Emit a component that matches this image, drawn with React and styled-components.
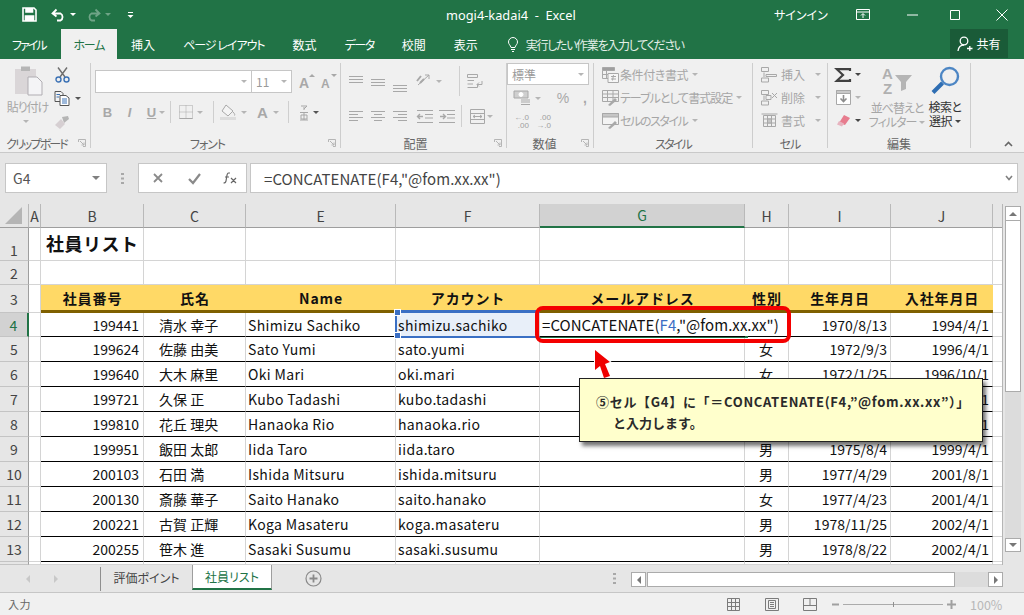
import React from 'react';
import styled, { createGlobalStyle } from 'styled-components';

const JP = `"Noto Sans CJK JP", "Noto Sans", sans-serif`;
const GREEN = '#217346';
const GRAY = '#a8a8a8';

const Global = createGlobalStyle`
  html, body { margin: 0; padding: 0; background: #e6e6e6; }
  body { font-family: ${JP}; overflow: hidden; }
`;

const Page = styled.div`
  width: 1024px;
  height: 615px;
  display: flex;
  flex-direction: column;
  overflow: hidden;
`;

/* title bar */
const TitleBar = styled.div`
  height: 29px;
  flex: none;
  background: ${GREEN};
  color: #fff;
  display: flex;
  align-items: center;
`;
const Qat = styled.div`
  width: 446px;
  flex: none;
  display: flex;
  align-items: center;
`;
const Slot = styled.div`
  width: ${(p) => p.$w}px;
  flex: none;
  display: flex;
  justify-content: ${(p) => p.$justify || 'center'};
  align-items: center;
  opacity: ${(p) => p.$dim || 1};
`;
const DocTitle = styled.div`
  width: 328px;
  flex: none;
  font-size: 12.8px;
  white-space: pre;
  font-family: "Noto Sans", sans-serif;
`;
const SignIn = styled.div`
  width: 82px;
  flex: none;
  font-size: 12px;
  font-feature-settings: "palt";
`;

/* tab row */
const TabRow = styled.div`
  height: 30px;
  flex: none;
  background: ${GREEN};
  display: flex;
  align-items: stretch;
  font-feature-settings: "palt";
`;
const Tab = styled.div`
  padding: 0 ${(p) => p.$pad || 14}px 0 ${(p) => p.$padL || p.$pad || 14}px;
  font-size: 12px;
  letter-spacing: ${(p) => p.$ls || 0}px;
  display: flex;
  align-items: center;
  white-space: pre;
  flex: none;
  color: ${(p) => (p.$active ? GREEN : '#fff')};
  background: ${(p) => (p.$active ? '#f0f0f0' : 'transparent')};
`;
const TellMe = styled.div`
  margin-left: 16px;
  flex: none;
  display: flex;
  align-items: center;
  gap: 8px;
  color: #e4efe8;
  font-size: 12px;
  letter-spacing: -1.3px;
  white-space: nowrap;
`;
const Share = styled.div`
  width: 58px;
  height: 29px;
  margin-left: auto;
  margin-right: 16px;
  background: #1a5b38;
  color: #fff;
  font-size: 12px;
  flex: none;
  white-space: nowrap;
  display: flex;
  align-items: center;
  justify-content: center;
  gap: 3px;
`;

/* ribbon */
const Ribbon = styled.div`
  height: 94px;
  flex: none;
  box-sizing: border-box;
  background: #f0f0f0;
  border-bottom: 1px solid #c9c9c9;
  display: flex;
  padding-top: 4px;
  position: relative;
  font-feature-settings: "palt";
`;
const Group = styled.div`
  width: ${(p) => p.$w}px;
  height: 85px;
  flex: none;
  box-sizing: border-box;
  border-right: 1px solid #cdcdcd;
  display: flex;
  flex-direction: column;
`;
const GroupBody = styled.div`
  flex: 1;
  min-height: 0;
  display: flex;
  padding-left: ${(p) => p.$left || 0}px;
`;
const GroupLabel = styled.div`
  height: 17px;
  margin-bottom: -5px;
  flex: none;
  position: relative;
  text-align: center;
  font-size: 12px;
  line-height: 15px;
  letter-spacing: ${(p) => p.$ls || 0}px;
  white-space: nowrap;
  color: #666;
  padding-right: ${(p) => p.$shift || 0}px;
`;
const Launcher = styled.span`
  position: absolute;
  right: 4px;
  top: 3px;
  display: block;
  line-height: 0;
`;
const Stack = styled.div`
  display: flex;
  flex-direction: column;
  gap: ${(p) => p.$gap || 0}px;
  padding-top: ${(p) => p.$top || 0}px;
  width: ${(p) => (p.$w ? `${p.$w}px` : 'auto')};
  align-items: ${(p) => p.$align || 'stretch'};
  flex: none;
`;
const ToolRow = styled.div`
  display: flex;
  align-items: center;
  height: ${(p) => p.$h || 22}px;
`;
const BigLabel = styled.div`
  font-size: 12px;
  line-height: 14px;
  letter-spacing: ${(p) => p.$ls || -1}px;
  color: ${(p) => (p.$on ? '#333' : '#a6a6a6')};
  text-align: center;
  white-space: nowrap;
  margin-top: ${(p) => p.$mt || 0}px;
  display: flex;
  align-items: center;
  gap: 3px;
`;
const RowText = styled.span`
  font-size: 12px;
  color: #a6a6a6;
  white-space: nowrap;
  letter-spacing: ${(p) => p.$ls || 0}px;
  margin-left: ${(p) => p.$ml || 1}px;
  width: ${(p) => (p.$w ? `${p.$w}px` : 'auto')};
`;
const Combo = styled.div`
  width: ${(p) => p.$w}px;
  height: ${(p) => p.$h || 23}px;
  box-sizing: border-box;
  background: #fff;
  border: 1px solid #c6c6c6;
  margin-right: ${(p) => p.$mr || 0}px;
  flex: none;
  display: flex;
  align-items: center;
  font-size: 12px;
  color: #9a9a9a;
  padding: 0 4px;
`;
const Tri = styled.span`
  display: block;
  width: 0;
  height: 0;
  border-left: 3px solid transparent;
  border-right: 3px solid transparent;
  border-top: 3px solid ${(p) => p.$c || '#b5b5b5'};
  margin-left: ${(p) => (p.$auto ? 'auto' : '0')};
`;
const VSep = styled.span`
  display: block;
  width: 1px;
  height: ${(p) => p.$h || 22}px;
  background: #cfcfcf;
  flex: none;
`;
const Collapse = styled.span`
  position: absolute;
  right: 11px;
  bottom: 5px;
  line-height: 0;
`;

/* formula bar */
const FormulaBar = styled.div`
  height: 51px;
  flex: none;
  box-sizing: border-box;
  padding: 10px 6px 11px 5px;
  background: #e6e6e6;
  display: flex;
  align-items: stretch;
`;
const BarBox = styled.div`
  box-sizing: border-box;
  background: #fff;
  border: 1px solid #c6c6c6;
  display: flex;
  align-items: center;
  width: ${(p) => (p.$w ? `${p.$w}px` : 'auto')};
  flex: ${(p) => (p.$w ? 'none' : '1')};
  color: #444;
`;
const NameText = styled.span`
  padding-left: 7px;
  flex: 1;
  font-size: 14px;
  color: #555;
`;
const FormulaText = styled.span`
  padding-left: 13px;
  flex: 1;
  font-size: 15px;
  letter-spacing: 0.05px;
  white-space: nowrap;
`;
const DotSlot = styled.div`
  width: 31px;
  flex: none;
  display: flex;
  align-items: center;
  justify-content: center;
`;

/* sheet */
const Sheet = styled.div`
  height: 361px;
  flex: none;
  position: relative;
  display: flex;
  background: #e6e6e6;
  overflow: hidden;
`;
const Grid = styled.div`
  width: 1002px;
  flex: none;
  display: grid;
  grid-template-columns: 29px 12px 103px 102px 150px 144px 205px 44px 102px 102px 9px;
  grid-template-rows: 24px 33px 24px 28px 24px repeat(9, 25px) 3px;
  background: #fff;
  border-right: 1px solid #b5b5b5;
`;
const ColHead = styled.div`
  box-sizing: border-box;
  background: ${(p) => (p.$sel ? '#d2d2d2' : '#e6e6e6')};
  color: ${(p) => (p.$sel ? GREEN : '#444')};
  border-right: ${(p) => (p.$plain ? 'none' : '1px solid #b9b9b9')};
  border-bottom: ${(p) => (p.$sel ? `2px solid ${GREEN}` : '1px solid #9e9e9e')};
  font-size: 14px;
  display: flex;
  align-items: center;
  justify-content: center;
`;
const RowHead = styled.div`
  box-sizing: border-box;
  background: ${(p) => (p.$sel ? '#d2d2d2' : '#e6e6e6')};
  color: ${(p) => (p.$sel ? GREEN : '#444')};
  border-right: ${(p) => (p.$sel ? `2px solid ${GREEN}` : '1px solid #9e9e9e')};
  border-bottom: 1px solid #c4c4c4;
  font-size: 14px;
  display: flex;
  align-items: ${(p) => (p.$low ? 'flex-end' : 'center')};
  justify-content: center;
`;
const Cell = styled.div`
  box-sizing: border-box;
  min-width: 0;
  white-space: nowrap;
  font-size: 14px;
  color: #111;
  display: flex;
  align-items: center;
  justify-content: ${(p) => p.$justify || 'flex-start'};
  padding: 0 ${(p) => p.$right || 3}px 0 ${(p) => p.$left || 2}px;
  border-right: ${(p) => (p.$noRight ? 'none' : '1px solid #d4d4d4')};
  border-bottom: 1px solid ${(p) => p.$line || '#d4d4d4'};
  background: ${(p) => p.$bg || 'transparent'};
  letter-spacing: ${(p) => p.$ls || 0}px;
`;
const TitleCell = styled(Cell)`
  font-size: 18px;
  font-weight: 700;
  letter-spacing: 0.5px;
  padding-left: 5px;
  padding-bottom: 2px;
`;
const HeadCell = styled.div`
  box-sizing: border-box;
  background: #ffd966;
  border-bottom: 3px solid #7f6000;
  font-size: 14px;
  font-weight: 700;
  color: #111;
  letter-spacing: 0.9px;
  display: flex;
  align-items: center;
  justify-content: center;
  white-space: nowrap;
`;
const FormulaCell = styled(Cell)`
  font-size: 15px;
  letter-spacing: 0.05px;
  padding-left: 2px;
  overflow: visible;
  position: relative;
  z-index: 1;
`;
const Ref = styled.span`
  color: #3c6ec4;
`;
const Range = styled.div`
  position: absolute;
  left: 395px;
  top: 106px;
  width: 145px;
  height: 28px;
  box-sizing: border-box;
  border: 2px solid #3a6fc4;
  border-top-width: 3px;
  border-right: none;
`;
const Handle = styled.span`
  position: absolute;
  left: -3px;
  ${(p) => (p.$bottom ? 'bottom: -3px;' : 'top: -4px;')}
  width: 5px;
  height: 5px;
  background: #3a6fc4;
  border: 0.5px solid #fff;
`;
const ActiveEdge = styled.div`
  position: absolute;
  left: 540px;
  top: 132px;
  width: 208px;
  height: 2px;
  background: ${GREEN};
`;
const RedBox = styled.div`
  position: absolute;
  left: 535px;
  top: 102px;
  width: 256px;
  height: 37px;
  box-sizing: border-box;
  border: 4px solid #f40000;
  border-radius: 8px;
  z-index: 3;
`;
const Pointer = styled.svg`
  position: absolute;
  left: 590px;
  top: 143px;
  z-index: 3;
`;
const Callout = styled.div`
  position: absolute;
  left: 579px;
  top: 174px;
  width: 404px;
  height: 64px;
  box-sizing: border-box;
  background: #ffffcc;
  border: 1px solid #222;
  box-shadow: 3px 4px 4px rgba(0, 0, 0, 0.55);
  padding: 12px 0 0 16px;
  font-size: 13px;
  line-height: 21px;
  font-weight: 700;
  color: #2a2a2a;
  white-space: nowrap;
  z-index: 4;
`;
const CalloutLine = styled.div`
  padding-left: ${(p) => p.$indent || 0}px;
  letter-spacing: ${(p) => p.$ls || 0}px;
`;
const VScroll = styled.div`
  width: 20px;
  flex: none;
  position: relative;
  display: flex;
  flex-direction: column;
  padding: 2px 0 0 2px;
  box-sizing: border-box;
`;
const VTrack = styled.div`
  width: 16px;
  height: 346px;
  flex: none;
  box-sizing: border-box;
  background: #dcdcdc;
  display: flex;
  flex-direction: column;
`;
const ScrollBtn = styled.div`
  height: ${(p) => p.$h || 15}px;
  width: ${(p) => (p.$w ? `${p.$w}px` : 'auto')};
  flex: none;
  box-sizing: border-box;
  background: #fff;
  border: 1px solid #ababab;
  display: flex;
  align-items: center;
  justify-content: center;
`;
const VThumb = styled.div`
  height: 171px;
  flex: none;
  box-sizing: border-box;
  background: #fff;
  border: 1px solid #ababab;
  border-top: none;
`;
const Spacer = styled.div`
  flex: 1;
`;
const Arrow = styled.span`
  display: block;
  width: 0;
  height: 0;
  ${(p) => {
    const c = p.$c || '#777';
    if (p.$dir === 'up') return `border-left:4px solid transparent;border-right:4px solid transparent;border-bottom:4px solid ${c};`;
    if (p.$dir === 'down') return `border-left:4px solid transparent;border-right:4px solid transparent;border-top:4px solid ${c};`;
    if (p.$dir === 'left') return `border-top:4px solid transparent;border-bottom:4px solid transparent;border-right:4px solid ${c};`;
    return `border-top:4px solid transparent;border-bottom:4px solid transparent;border-left:4px solid ${c};`;
  }}
`;

/* sheet tabs */
const TabStrip = styled.div`
  height: 28px;
  flex: none;
  box-sizing: border-box;
  border-bottom: 1px solid #c6c6c6;
  background: #e6e6e6;
  display: flex;
  align-items: stretch;
`;
const SheetNav = styled.div`
  width: 101px;
  flex: none;
  box-sizing: border-box;
  display: flex;
  align-items: center;
  padding-left: 26px;
  gap: 24px;
  height: 24px;
  border-right: 1px solid #8f8f8f;
  margin-top: 2px;
`;
const SheetTab = styled.div`
  width: ${(p) => p.$w}px;
  flex: none;
  box-sizing: border-box;
  height: 25px;
  font-size: 12px;
  font-feature-settings: "palt";
  display: flex;
  align-items: center;
  justify-content: center;
  color: ${(p) => (p.$active ? GREEN : '#444')};
  background: ${(p) => (p.$active ? '#fff' : 'transparent')};
  border-left: ${(p) => (p.$active ? '1px solid #9e9e9e' : 'none')};
  border-right: ${(p) => (p.$active ? '1px solid #9e9e9e' : 'none')};
  border-bottom: ${(p) => (p.$active ? `2px solid ${GREEN}` : 'none')};
`;
const AddSlot = styled.div`
  width: 359px;
  flex: none;
  padding-left: 33px;
  box-sizing: border-box;
  display: flex;
  align-items: center;
  height: 26px;
`;
const TabGrip = styled.div`
  margin-left: auto;
  margin-right: 15px;
`;
const HScroll = styled.div`
  width: 372px;
  flex: none;
  height: 15px;
  margin-top: 7px;
  display: flex;
  background: #dcdcdc;
`;
const HThumb = styled.div`
  width: 308px;
  flex: none;
  margin-left: 1px;
  box-sizing: border-box;
  background: #fff;
  border: 1px solid #ababab;
`;

/* status bar */
const StatusBar = styled.div`
  flex: 1;
  background: #f0f0f0;
  display: flex;
  align-items: center;
  font-size: 11px;
  color: #666;
  padding-left: 8px;
`;
const StatusText = styled.span`
  width: 719px;
  flex: none;
  letter-spacing: 0.5px;
`;
const ZoomLine = styled.div`
  width: 100px;
  height: 1px;
  background: #ababab;
  flex: none;
  position: relative;
  margin: 0 4px;
`;
const ZoomTick = styled.span`
  position: absolute;
  left: 50px;
  top: -2px;
  width: 1px;
  height: 5px;
  background: #8f8f8f;
`;
const Pct = styled.span`
  margin-left: 14px;
  color: #b8b8b8;
  font-size: 12.5px;
`;
const Letter = styled.span`
  font-size: ${(p) => p.$size || 13}px;
  font-weight: ${(p) => p.$weight || 700};
  font-style: ${(p) => (p.$italic ? 'italic' : 'normal')};
  text-decoration: ${(p) => (p.$under ? 'underline' : 'none')};
  font-family: "Liberation Sans", sans-serif;
  color: #a8a8a8;
`;
const DecWrap = styled.div`
  display: flex;
  flex-direction: column;
  font-size: 8px;
  line-height: 8px;
  color: #9f9f9f;
  font-family: "Liberation Sans", sans-serif;
  text-align: right;
`;

/* small svg helpers */
const Ic = ({ w = 16, h = 16, children, fill = 'none', stroke = GRAY, sw = 1 }) => (
  <svg width={w} height={h} viewBox={`0 0 ${w} ${h}`} fill={fill} stroke={stroke} strokeWidth={sw} style={{ display: 'block', overflow: 'visible' }}>
    {children}
  </svg>
);
const Lines = ({ rows, w = 15, h = 15 }) => (
  <Ic w={w} h={h}>
    {rows.map(([x1, x2, y]) => <path key={`${x1}${y}`} d={`M${x1} ${y + 0.5}H${x2}`} />)}
  </Ic>
);
const LauncherIcon = () => (
  <Launcher>
    <Ic w={8} h={8} stroke="#b5b5b5"><path d="M0.5 3V0.5H7.5V7.5H5M2 2L6 6M6 3.5V6H3.5" /></Ic>
  </Launcher>
);
const Save = () => (
  <Ic w={15} h={15} stroke="#fff" sw={1.6}>
    <path d="M1 1H12L14 3V14H1Z" />
    <path d="M4 1V5H10.5V1" fill="#fff" />
    <path d="M3.5 14V9H11.5V14" fill="#fff" />
  </Ic>
);
const Undo = () => (
  <Ic w={15} h={14} stroke="#fff" sw={1.8}>
    <path d="M5.5 1.5L1.5 5.5L5.5 8.5M2 5.5H9.5A4 4 0 0 1 9.5 12.5H6" />
  </Ic>
);
const Redo = () => (
  <Ic w={15} h={14} stroke="#fff" sw={1.8}>
    <path d="M9.5 1.5L13.5 5.5L9.5 8.5M13 5.5H5.5A4 4 0 0 0 5.5 12.5H9" />
  </Ic>
);
const Bulb = () => (
  <Ic w={10} h={15} stroke="#fff">
    <path d="M3 10.5C2.5 8 .5 7.5 .5 5A4.5 4.5 0 0 1 9.5 5C9.5 7.5 7.5 8 7 10.5ZM3 12.5H7M4 14.5H6" />
  </Ic>
);
const Person = () => (
  <Ic w={16} h={16} stroke="#fff" sw={1.3}>
    <circle cx="7" cy="5" r="3.8" />
    <path d="M1 15C1.5 11 4 9 7 9M10 12.5H15.5M12.8 10V15" />
  </Ic>
);
const Paste = () => (
  <Ic w={30} h={30} stroke="none">
    <path d="M1 4H22V29H1Z" fill="#dad6d8" />
    <path d="M7 1.5H16V6H7Z" fill="#b6b6b6" />
    <path d="M14 12H23L28 17V30H14Z" fill="#f4f4f6" stroke="#b0adb2" />
  </Ic>
);
const Scissors = () => (
  <Ic w={15} h={16} stroke="#6f6f6f" sw={1.4}>
    <path d="M3 .5L10 10M12 .5L5 10" />
    <circle cx="3.5" cy="12.5" r="2.5" stroke="#3c72b5" />
    <circle cx="11.5" cy="12.5" r="2.5" stroke="#3c72b5" />
  </Ic>
);
const Copy = () => (
  <Ic w={16} h={15} stroke="#555">
    <path d="M1 .5H7L9 2.5V10.5H1Z" fill="#f4f4f4" />
    <path d="M6 4.5H12L15 7V14.5H6Z" fill="#fff" />
    <path d="M2.5 3.5H6M2.5 6H5M8 8H13M8 10H13M8 12H13" stroke="#3c72b5" />
  </Ic>
);
const Painter = () => (
  <Ic w={16} h={15} stroke="none">
    <path d="M8 2L14 1L15 4L10 8Z" fill="#b5b5b5" />
    <path d="M1 10L7 4L11 9L6 14Z" fill="#d6cfd2" />
  </Ic>
);
const GrowA = ({ up }) => (
  <Ic w={16} h={18} stroke="none">
    <text x="0" y="15" fontSize={up ? 14 : 12} fontWeight="700" fill="#a8a8a8" fontFamily="Liberation Sans">A</text>
    <path d={up ? 'M10 4L13 1L16 4Z' : 'M10 1H16L13 4Z'} fill="#a8a8a8" />
  </Ic>
);
const Borders = () => (
  <Ic w={14} h={14}>
    <path d="M.5 .5H13.5V13.5H.5ZM.5 7H13.5M7 .5V13.5" strokeDasharray="1 1" />
    <path d="M.5 13.5H13.5" />
  </Ic>
);
const Bucket = () => (
  <Ic w={17} h={16}>
    <path d="M6 1L13 7L8 12L2 7Z" fill="#f4f4f4" />
    <path d="M13 8C15 10 15 11 14.5 11.5" />
    <path d="M0 14.5H16" stroke="#dcdcdc" strokeWidth="3" />
  </Ic>
);
const Ruby = () => (
  <Ic w={10} h={17}>
    <path d="M2 2H8L5 5M5 3V6M1 8.5H9M5 8.5V16M2 11H8V15H2ZM1 16H9" />
  </Ic>
);
const Slant = () => (
  <Ic w={17} h={17}>
    <path d="M2 12L13 2M13 2H9M13 2V6" />
    <path d="M1 8L5 3M4 10L8 6" strokeWidth="2" />
  </Ic>
);
const Wrap = () => (
  <Ic w={16} h={15}>
    <path d="M.5 .5H10.5V3.5H.5ZM.5 6.5H7M.5 10H6M.5 13.5H10.5V10M15 7V10.5H10M12 8.5L10 10.5L12 12.5" />
  </Ic>
);
const Merge = () => (
  <Ic w={15} h={15}>
    <path d="M.5 .5H14.5V14.5H.5ZM.5 4.5H14.5M.5 10.5H14.5M3 7.5H12M3 7.5L5 6M3 7.5L5 9M12 7.5L10 6M12 7.5L10 9" />
  </Ic>
);
const Indent = ({ flip }) => (
  <Ic w={16} h={13}>
    <path d="M0 .5H16M8 4.5H16M8 8H16M0 12.5H16" />
    <path d={flip ? 'M1 6.5H6M4 4L6.5 6.5L4 9' : 'M6 6.5H1M3 4L.5 6.5L3 9'} strokeWidth="1.4" />
  </Ic>
);
const Currency = () => (
  <Ic w={18} h={16}>
    <path d="M1 1H15V8H1Z" fill="#cfcfcf" />
    <circle cx="8" cy="4.5" r="2" fill="#fff" stroke="#fff" />
    <path d="M8 10H17M8 12H17M8 14.5H17" />
  </Ic>
);
const DecimalIcon = ({ a, b, left }) => (
  <DecWrap>
    <span>{left ? `←${a}` : a}</span>
    <span>{left ? b : `→${b}`}</span>
  </DecWrap>
);
const CondIcon = () => (
  <Ic w={17} h={16}>
    <path d="M.5 .5H12.5V3.5H.5Z" fill="#9f9f9f" />
    <path d="M.5 3.5V11.5H6M4.5 3.5V11.5M.5 7.5H6" />
    <path d="M6 6.5H16.5V15.5H6Z" fill="#f6f6f6" />
    <path d="M9 9.5H14M9 12H14M11.5 8L10.5 13.5" />
  </Ic>
);
const TableIcon = () => (
  <Ic w={17} h={16}>
    <path d="M.5 .5H16.5V11.5H.5ZM5.5 .5V11.5M11 .5V11.5M.5 4H16.5M.5 7.5H16.5" />
    <path d="M6 15L13 8L15 10L8 16Z" fill="#a8a8a8" stroke="none" />
  </Ic>
);
const StyleIcon = () => (
  <Ic w={17} h={16}>
    <path d="M.5 .5H16.5V11.5H.5Z" fill="#f4f4f4" />
    <path d="M.5 .5H16.5V4H.5Z" fill="#c6c6c6" />
    <path d="M6 15L13 8L15 10L8 16Z" fill="#a8a8a8" stroke="none" />
  </Ic>
);
const CellInsert = () => (
  <Ic w={17} h={16}>
    <path d="M.5 .5H7.5V4.5H.5ZM.5 11H7.5V15H.5ZM3 5.5V10M5 7.5H15.5V9.5H5Z" />
  </Ic>
);
const CellDelete = () => (
  <Ic w={17} h={16}>
    <path d="M.5 .5H7.5V4.5H.5ZM.5 11H7.5V15H.5ZM3 5.5V10M5 5.5H10V9.5H5ZM11 3L16 8M16 3L11 8" />
  </Ic>
);
const CellFormat = () => (
  <Ic w={17} h={16}>
    <path d="M2.5 2.5H14.5V13.5H2.5ZM.5 1H16.5M2.5 6H14.5M2.5 10H14.5M6.5 2.5V13.5M10.5 2.5V13.5" />
    <path d="M6.5 6H10.5V10H6.5Z" fill="#c6c6c6" />
  </Ic>
);
const Sigma = () => (
  <Ic w={16} h={14} stroke="#404040" sw={2.2}>
    <path d="M15 3V1.2H1.8L8 7L1.8 12.8H15V11" />
  </Ic>
);
const FillDown = () => (
  <Ic w={15} h={15}>
    <path d="M.5 .5H14.5V14.5H.5Z" fill="#fff" />
    <path d="M.5 .5H14.5V3.5H.5Z" fill="#c8c8c8" />
    <path d="M7.5 5V11M4.5 8.5L7.5 11.5L10.5 8.5" strokeWidth="1.6" stroke="#8c8c8c" />
  </Ic>
);
const Eraser = () => (
  <Ic w={15} h={13} stroke="none">
    <path d="M8 1L14 4L9 11L3 9Z" fill="#e77c8e" />
    <path d="M3 7L8 9.5L6 12.5L1 10.5Z" fill="#e7b3bf" />
  </Ic>
);
const SortFilter = () => (
  <Ic w={31} h={30} stroke="none">
    <text x="0" y="13" fontSize="15" fill="#b0b0b0" fontFamily="Liberation Sans" fontWeight="700">A</text>
    <text x="1" y="28" fontSize="15" fill="#b0b0b0" fontFamily="Liberation Sans" fontWeight="700">Z</text>
    <path d="M13 9H30L24 16V23L19 25V16Z" fill="#b5b5b5" />
  </Ic>
);
const Search = () => (
  <Ic w={29} h={29} stroke="#4d86c4" sw={2.4}>
    <circle cx="18.5" cy="10.5" r="8.5" />
    <path d="M11.5 17L2 26.5" strokeWidth="4" stroke="#2f6eb3" />
  </Ic>
);
const ViewGrid = () => (
  <Ic w={13} h={13} stroke="#7b7b7b"><path d="M.5 .5H12.5V12.5H.5ZM4.5 .5V12.5M8.5 .5V12.5M.5 4.5H12.5M.5 8.5H12.5" /></Ic>
);
const ViewPage = () => (
  <Ic w={14} h={13} stroke="#7b7b7b"><path d="M.5 .5H13.5V12.5H.5ZM3.5 2.5H10.5V10.5H3.5ZM5 4.5H9M5 6.5H9M5 8.5H9" /></Ic>
);
const ViewBreak = () => (
  <Ic w={14} h={13} stroke="#7b7b7b"><path d="M.5 .5H13.5V12.5H.5ZM.5 7.5H13.5M7 .5V7.5" /></Ic>
);
const PlusCircle = () => (
  <Ic w={17} h={17} stroke="#8a8a8a" sw={1.2}>
    <circle cx="8.5" cy="8.5" r="7.5" />
    <path d="M4.5 8.5H12.5M8.5 4.5V12.5" strokeWidth="1.8" />
  </Ic>
);
const Grip = () => (
  <Ic w={3} h={11} stroke="none">
    <path d="M0 0H3V2H0ZM0 4.5H3V6.5H0ZM0 9H3V11H0Z" fill="#a8a8a8" />
  </Ic>
);

const columns = ['A', 'B', 'C', 'E', 'F', 'G', 'H', 'I', 'J'];
const heads = ['社員番号', '氏名', 'Name', 'アカウント', 'メールアドレス', '性別', '生年月日', '入社年月日'];
const staff = [
  ['199441', '清水 幸子', 'Shimizu Sachiko', 'shimizu.sachiko', '', '1970/8/13', '1994/4/1'],
  ['199624', '佐藤 由美', 'Sato Yumi', 'sato.yumi', '女', '1972/9/3', '1996/4/1'],
  ['199640', '大木 麻里', 'Oki Mari', 'oki.mari', '女', '1972/1/25', '1996/10/1'],
  ['199721', '久保 正', 'Kubo Tadashi', 'kubo.tadashi', '男', '1974/2/15', '1998/4/1'],
  ['199810', '花丘 理央', 'Hanaoka Rio', 'hanaoka.rio', '女', '1974/11/8', '1998/4/1'],
  ['199951', '飯田 太郎', 'Iida Taro', 'iida.taro', '男', '1975/8/4', '1999/4/1'],
  ['200103', '石田 満', 'Ishida Mitsuru', 'ishida.mitsuru', '男', '1977/4/29', '2001/8/1'],
  ['200130', '斎藤 華子', 'Saito Hanako', 'saito.hanako', '女', '1977/4/23', '2001/4/1'],
  ['200221', '古賀 正輝', 'Koga Masateru', 'koga.masateru', '男', '1978/11/25', '2002/4/1'],
  ['200255', '笹木 進', 'Sasaki Susumu', 'sasaki.susumu', '男', '1978/8/22', '2002/4/1'],
];

const BlankRow = ({ n, low, title }) => (
  <>
    <RowHead $low={low}>{n}</RowHead>
    <Cell />
    {title ? <TitleCell>{title}</TitleCell> : <Cell />}
    <Cell /><Cell /><Cell /><Cell /><Cell /><Cell /><Cell /><Cell $noRight />
  </>
);

const StaffRow = ({ row, n, active }) => (
  <>
    <RowHead $sel={active}>{n}</RowHead>
    <Cell />
    <Cell $justify="flex-end" $line="#000" $right={4}>{row[0]}</Cell>
    <Cell $left={15} $line="#000">{row[1]}</Cell>
    <Cell $line="#000" $ls={0.35}>{row[2]}</Cell>
    <Cell $line="#000" $ls={0.35} $bg={active ? '#e8eff9' : undefined}>{row[3]}</Cell>
    {active ? (
      <FormulaCell $line="#000" $noRight>
        =CONCATENATE(<Ref>F4</Ref>,"@fom.xx.xx")
      </FormulaCell>
    ) : <Cell $line="#000" />}
    <Cell $justify="center" $line="#000">{row[4]}</Cell>
    <Cell $justify="flex-end" $line="#000">{row[5]}</Cell>
    <Cell $justify="flex-end" $line="#000">{row[6]}</Cell>
    <Cell $noRight />
  </>
);

const StyleRow = ({ icon, text, ls }) => (
  <ToolRow $h={23}>
    <Slot $w={18}>{icon}</Slot>
    <RowText $ls={ls}>{text}</RowText>
    <Slot $w={14}><Tri /></Slot>
  </ToolRow>
);

const CellRow = ({ icon, text }) => (
  <ToolRow $h={23}>
    <Slot $w={18}>{icon}</Slot>
    <RowText $ml={3} $w={30}>{text}</RowText>
    <Slot $w={14}><Tri /></Slot>
  </ToolRow>
);

const App = () => (
  <Page>
    <Global />
    <TitleBar>
      <Qat>
        <Slot $w={22} />
        <Slot $w={15}><Save /></Slot>
        <Slot $w={14} />
        <Slot $w={15}><Undo /></Slot>
        <Slot $w={13}><Tri $c="#fff" /></Slot>
        <Slot $w={7} />
        <Slot $w={15} $dim={0.35}><Redo /></Slot>
        <Slot $w={13} $dim={0.35}><Tri $c="#fff" /></Slot>
        <Slot $w={10} />
        <Slot $w={13}>
          <Ic w={7} h={7} stroke="#fff"><path d="M1 1.5H6" /><path d="M.5 4H6.5L3.5 7Z" fill="#fff" stroke="none" /></Ic>
        </Slot>
      </Qat>
      <DocTitle>{'mogi4-kadai4  -  Excel'}</DocTitle>
      <SignIn>サインイン</SignIn>
      <Slot $w={14}>
        <Ic w={14} h={11} stroke="#fff"><path d="M.5 .5H13.5V10.5H.5ZM.5 3H13.5M7 9V5M5 6.5L7 4.5L9 6.5" /></Ic>
      </Slot>
      <Slot $w={34} />
      <Slot $w={16}><Ic w={11} h={2} stroke="#fff"><path d="M0 1H11" /></Ic></Slot>
      <Slot $w={30} />
      <Slot $w={10}><Ic w={10} h={10} stroke="#fff"><path d="M.5 .5H9.5V9.5H.5Z" /></Ic></Slot>
      <Slot $w={36} />
      <Slot $w={12}><Ic w={12} h={12} stroke="#fff"><path d="M.5 .5L11.5 11.5M11.5 .5L.5 11.5" /></Ic></Slot>
    </TitleBar>

    <TabRow>
      <Tab $padL={12} $pad={15} $ls={-2}>ファイル</Tab>
      <Tab $active $pad={13} $ls={-1.3}>ホーム</Tab>
      <Tab>挿入</Tab>
      <Tab $ls={-1}>ページ レイアウト</Tab>
      <Tab>数式</Tab>
      <Tab $ls={-1.5}>データ</Tab>
      <Tab>校閲</Tab>
      <Tab>表示</Tab>
      <TellMe><Bulb />実行したい作業を入力してください</TellMe>
      <Share><Person />共有</Share>
    </TabRow>

    <Ribbon>
      <Group $w={91}>
        <GroupBody>
          <Stack $w={52} $top={2} $align="center">
            <Slot $w={30} style={{ marginLeft: 6 }}><Paste /></Slot>
            <BigLabel $mt={5} style={{ marginLeft: 3 }}>貼り付け</BigLabel>
            <Slot $w={10} style={{ marginTop: 6 }}><Tri /></Slot>
          </Stack>
          <Stack $w={36}>
            <ToolRow $h={23}><Slot $w={20}><Scissors /></Slot></ToolRow>
            <ToolRow $h={24}><Slot $w={20}><Copy /></Slot><Slot $w={12}><Tri $c="#555" /></Slot></ToolRow>
            <ToolRow $h={24}><Slot $w={20}><Painter /></Slot></ToolRow>
          </Stack>
        </GroupBody>
        <GroupLabel $shift={17} $ls={-1.9}>クリップボード<LauncherIcon /></GroupLabel>
      </Group>

      <Group $w={250}>
        <GroupBody $left={4}>
          <Stack $top={7} $gap={8}>
            <ToolRow $h={23}>
              <Combo $w={157} $mr={-1}><Tri $auto /></Combo>
              <Combo $w={41}>11<Tri $auto /></Combo>
              <Slot $w={7} />
              <Slot $w={16}><GrowA up /></Slot>
              <Slot $w={6} />
              <Slot $w={16}><GrowA /></Slot>
            </ToolRow>
            <ToolRow $h={22}>
              <Slot $w={6} />
              <Slot $w={13}><Letter>B</Letter></Slot>
              <Slot $w={9} />
              <Slot $w={13}><Letter $italic>I</Letter></Slot>
              <Slot $w={9} />
              <Slot $w={13}><Letter $under>U</Letter></Slot>
              <Slot $w={8}><Tri /></Slot>
              <Slot $w={4} />
              <VSep />
              <Slot $w={7} />
              <Slot $w={15}><Borders /></Slot>
              <Slot $w={14}><Tri /></Slot>
              <Slot $w={6} />
              <VSep />
              <Slot $w={6} />
              <Slot $w={17}><Bucket /></Slot>
              <Slot $w={14}><Tri /></Slot>
              <Slot $w={6} />
              <Slot $w={11}><Letter $size={15}>A</Letter></Slot>
              <Slot $w={16}><Tri /></Slot>
              <Slot $w={4} />
              <VSep />
              <Slot $w={10} />
              <Slot $w={10}><Ruby /></Slot>
              <Slot $w={14}><Tri $c="#555" /></Slot>
            </ToolRow>
          </Stack>
        </GroupBody>
        <GroupLabel $shift={16} $ls={-1}>フォント<LauncherIcon /></GroupLabel>
      </Group>

      <Group $w={166}>
        <GroupBody $left={8}>
          <Stack $top={3} $gap={9}>
            <ToolRow $h={30}>
              <Slot $w={15}><Lines rows={[[0, 14, 2], [0, 14, 5], [0, 14, 8]]} /></Slot>
              <Slot $w={7} />
              <Slot $w={15}><Lines rows={[[0, 14, 5], [0, 14, 8], [0, 14, 11]]} /></Slot>
              <Slot $w={7} />
              <Slot $w={15} style={{ marginTop: 6 }}><Lines rows={[[0, 14, 8], [0, 14, 11], [0, 14, 14]]} /></Slot>
              <Slot $w={8} />
              <Slot $w={17}><Slant /></Slot>
              <Slot $w={12}><Tri /></Slot>
              <Slot $w={14} />
              <VSep $h={30} />
              <Slot $w={7} />
              <Slot $w={16}><Wrap /></Slot>
            </ToolRow>
            <ToolRow $h={22}>
              <Slot $w={15}><Lines rows={[[0, 14, 2], [0, 9, 5], [0, 14, 8], [0, 9, 11]]} /></Slot>
              <Slot $w={7} />
              <Slot $w={15}><Lines rows={[[0, 14, 2], [3, 11, 5], [0, 14, 8], [3, 11, 11]]} /></Slot>
              <Slot $w={7} />
              <Slot $w={15}><Lines rows={[[0, 14, 2], [5, 14, 5], [0, 14, 8], [5, 14, 11]]} /></Slot>
              <Slot $w={9} />
              <Slot $w={16}><Indent /></Slot>
              <Slot $w={6} />
              <Slot $w={16}><Indent flip /></Slot>
              <Slot $w={6} />
              <VSep />
              <Slot $w={8} />
              <Slot $w={15}><Merge /></Slot>
              <Slot $w={10}><Tri /></Slot>
            </ToolRow>
          </Stack>
        </GroupBody>
        <GroupLabel $shift={16}>配置<LauncherIcon /></GroupLabel>
      </Group>

      <Group $w={87}>
        <GroupBody>
          <Stack>
            <Combo $w={82} $h={22}>標準<Tri $auto /></Combo>
            <ToolRow $h={26}>
              <Slot $w={6} />
              <Slot $w={18}><Currency /></Slot>
              <Slot $w={14}><Tri /></Slot>
              <Slot $w={11} />
              <Slot $w={14}><Letter $size={14} $weight={400}>%</Letter></Slot>
              <Slot $w={12} />
              <Slot $w={6}><Letter $size={14}>,</Letter></Slot>
            </ToolRow>
            <ToolRow $h={22}>
              <Slot $w={7} />
              <Slot $w={15}><DecimalIcon a=".0" b=".00" left /></Slot>
              <Slot $w={7} />
              <Slot $w={15}><DecimalIcon a=".00" b=".0" /></Slot>
            </ToolRow>
          </Stack>
        </GroupBody>
        <GroupLabel $shift={11}>数値<LauncherIcon /></GroupLabel>
      </Group>

      <Group $w={159}>
        <GroupBody $left={7}>
          <Stack>
            <StyleRow icon={<CondIcon />} text="条件付き書式" ls={-0.4} />
            <StyleRow icon={<TableIcon />} text="テーブルとして書式設定" ls={-1} />
            <StyleRow icon={<StyleIcon />} text="セルのスタイル" ls={-1.4} />
          </Stack>
        </GroupBody>
        <GroupLabel $ls={-1.8}>スタイル</GroupLabel>
      </Group>

      <Group $w={75}>
        <GroupBody $left={7}>
          <Stack>
            <CellRow icon={<CellInsert />} text="挿入" />
            <CellRow icon={<CellDelete />} text="削除" />
            <CellRow icon={<CellFormat />} text="書式" />
          </Stack>
        </GroupBody>
        <GroupLabel $ls={-1}>セル</GroupLabel>
      </Group>

      <Group $w={143}>
        <GroupBody $left={7}>
          <Stack $w={36}>
            <ToolRow $h={23}><Slot $w={16}><Sigma /></Slot><Slot $w={14}><Tri $c="#444" /></Slot></ToolRow>
            <ToolRow $h={23}><Slot $w={16}><FillDown /></Slot><Slot $w={14}><Tri /></Slot></ToolRow>
            <ToolRow $h={23}><Slot $w={16}><Eraser /></Slot><Slot $w={14}><Tri $c="#444" /></Slot></ToolRow>
          </Stack>
          <Stack $w={52} $top={3} $align="center">
            <SortFilter />
            <BigLabel $mt={5}>並べ替えと</BigLabel>
            <BigLabel>フィルター<Tri /></BigLabel>
          </Stack>
          <Stack $w={44} $top={3} $align="center">
            <Search />
            <BigLabel $on $mt={5} $ls={-0.6}>検索と</BigLabel>
            <BigLabel $on $ls={-0.6}>選択<Tri $c="#444" /></BigLabel>
          </Stack>
        </GroupBody>
        <GroupLabel>編集</GroupLabel>
      </Group>

      <Collapse>
        <Ic w={9} h={6} stroke="#666" sw={1.6}><path d="M1 5L4.5 1.5L8 5" /></Ic>
      </Collapse>
    </Ribbon>

    <FormulaBar>
      <BarBox $w={102}>
        <NameText>G4</NameText>
        <Slot $w={20}><Arrow $dir="down" $c="#808080" /></Slot>
      </BarBox>
      <DotSlot><Grip /></DotSlot>
      <BarBox $w={109}>
        <Slot $w={37}>
          <Ic w={10} h={10} stroke="#8a8a8a" sw={1.8}><path d="M1 1L9 9M9 1L1 9" /></Ic>
        </Slot>
        <Slot $w={36}>
          <Ic w={13} h={11} stroke="#8a8a8a" sw={2.2}><path d="M1 6L5 10L12 1" /></Ic>
        </Slot>
        <Slot $w={36}>
          <Ic w={14} h={12} stroke="#666" sw={1.2}><path d="M7 1H5.5C4 1 4 3 3.5 6L3 9C2.8 11 1.5 11 .5 11M2 5H6M8 6L13 11M13 6L8 11" /></Ic>
        </Slot>
      </BarBox>
      <Slot $w={3} />
      <BarBox>
        <FormulaText>=CONCATENATE(F4,"@fom.xx.xx")</FormulaText>
        <Slot $w={16}>
          <Ic w={8} h={6} stroke="#808080" sw={1.6}><path d="M1 1L4 4.5L7 1" /></Ic>
        </Slot>
      </BarBox>
    </FormulaBar>

    <Sheet>
      <Grid>
        <ColHead>
          <Ic w={19} h={17} stroke="none"><path d="M17 0V17H0Z" fill="#b5b5b5" /></Ic>
        </ColHead>
        {columns.map((c) => <ColHead key={c} $sel={c === 'G'}>{c}</ColHead>)}
        <ColHead $plain />

        <BlankRow n={1} low title="社員リスト" />
        <BlankRow n={2} />

        <RowHead>3</RowHead>
        <Cell />
        {heads.map((h) => <HeadCell key={h}>{h}</HeadCell>)}
        <Cell $noRight />

        {staff.map((row, i) => (
          <StaffRow key={row[0]} row={row} n={i + 4} active={i === 0} />
        ))}

        <RowHead />
        <Cell /><Cell /><Cell /><Cell /><Cell /><Cell /><Cell /><Cell /><Cell /><Cell $noRight />
      </Grid>
      <VScroll>
        <VTrack>
          <ScrollBtn><Arrow $dir="up" /></ScrollBtn>
          <VThumb />
          <Spacer />
          <ScrollBtn $h={14}><Arrow $dir="down" /></ScrollBtn>
        </VTrack>
      </VScroll>

      <Range><Handle /><Handle $bottom /></Range>
      <ActiveEdge />
      <RedBox />
      <Pointer width="26" height="36" viewBox="0 0 26 36">
        <path d="M5 3L20 15L15 17L20 29L14 31L10 19L5 23Z" fill="#f00000" stroke="#fff" strokeWidth="2" paintOrder="stroke" />
      </Pointer>
      <Callout>
        <CalloutLine $ls={0.7}>⑤セル【G4】に「＝CONCATENATE(F4,”@fom.xx.xx”）」</CalloutLine>
        <CalloutLine $indent={17}>と入力します。</CalloutLine>
      </Callout>
    </Sheet>

    <TabStrip>
      <SheetNav>
        <Arrow $dir="left" $c="#c8c8c8" />
        <Arrow $dir="right" $c="#c8c8c8" />
      </SheetNav>
      <SheetTab $w={91}>評価ポイント</SheetTab>
      <SheetTab $w={80} $active>社員リスト</SheetTab>
      <AddSlot>
        <PlusCircle />
        <TabGrip><Grip /></TabGrip>
      </AddSlot>
      <HScroll>
        <ScrollBtn $w={15} $h={15}><Arrow $dir="left" /></ScrollBtn>
        <HThumb />
        <Spacer />
        <ScrollBtn $w={15} $h={15}><Arrow $dir="right" /></ScrollBtn>
      </HScroll>
    </TabStrip>

    <StatusBar>
      <StatusText>入力</StatusText>
      <Slot $w={13}><ViewGrid /></Slot>
      <Slot $w={25} />
      <Slot $w={14}><ViewPage /></Slot>
      <Slot $w={24} />
      <Slot $w={14}><ViewBreak /></Slot>
      <Slot $w={15} />
      <Slot $w={7}><Ic w={7} h={3} stroke="#a0a0a0" sw={2}><path d="M0 1.5H7" /></Ic></Slot>
      <ZoomLine><ZoomTick /></ZoomLine>
      <Slot $w={9}><Ic w={9} h={9} stroke="#a0a0a0" sw={2}><path d="M0 4.5H9M4.5 0V9" /></Ic></Slot>
      <Pct>100%</Pct>
    </StatusBar>
  </Page>
);

export default App;
